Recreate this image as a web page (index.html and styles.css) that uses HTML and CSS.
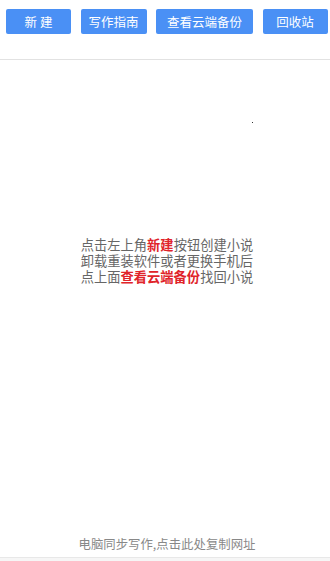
FILE: index.html
```html
<!DOCTYPE html>
<html lang="zh">
<head>
<meta charset="utf-8">
<link rel="stylesheet" href="styles.css">
</head>
<body>
<div class="page">
  <header class="toolbar">
    <button class="btn btn-sm">新 建</button>
    <button class="btn btn-md">写作指南</button>
    <button class="btn btn-lg">查看云端备份</button>
    <button class="btn btn-sm">回收站</button>
  </header>
  <main class="main">
    <span class="dot"></span>
    <p class="tip">点击左上角<b class="red">新建</b>按钮创建小说<br>卸载重装软件或者更换手机后<br>点上面<b class="red">查看云端备份</b>找回小说</p>
  </main>
  <footer class="footer">电脑同步写作,点击此处复制网址</footer>
  <div class="bottom-bar"></div>
</div>
</body>
</html>
```

FILE: styles.css
```css
* { box-sizing: border-box; }
html, body { margin: 0; padding: 0; background: #fff; }
body {
  font-family: "Noto Sans CJK SC", "Noto Sans", sans-serif;
  width: 330px;
  height: 561px;
  overflow: hidden;
}
.page {
  display: flex;
  flex-direction: column;
  height: 561px;
}
.toolbar {
  height: 60px;
  flex: none;
  display: flex;
  align-items: flex-start;
  gap: 9.5px;
  padding: 9px 0 0 6px;
  border-bottom: 1px solid #e2e2e2;
}
.btn {
  flex: none;
  height: 25px;
  border: none;
  border-radius: 2px;
  background: #4a90f5;
  color: #fff;
  font-family: "Noto Sans CJK SC", sans-serif;
  font-size: 12.5px;
  line-height: 25px;
  padding: 0;
  margin: 0;
}
.btn-sm { width: 65px; }
.btn-md { width: 66px; }
.btn-lg { width: 97px; }
.main {
  flex: 1;
  position: relative;
  padding-top: 177px;
}
.dot {
  position: absolute;
  left: 252px;
  top: 62px;
  width: 1px;
  height: 1px;
  background: #333;
}
.tip {
  margin: 0;
  text-align: center;
  font-size: 13.25px;
  line-height: 16px;
  color: #666;
  padding-left: 4px;
}
.red { color: #e0242a; font-weight: bold; }
.footer {
  flex: none;
  height: 21px;
  text-align: center;
  font-size: 12.4px;
  line-height: 16px;
  color: #888;
  padding: 0 0 0 4px;
}
.bottom-bar {
  flex: none;
  height: 4px;
  border-top: 1px solid #e8e8e8;
  background: #f6f6f6;
}
```
